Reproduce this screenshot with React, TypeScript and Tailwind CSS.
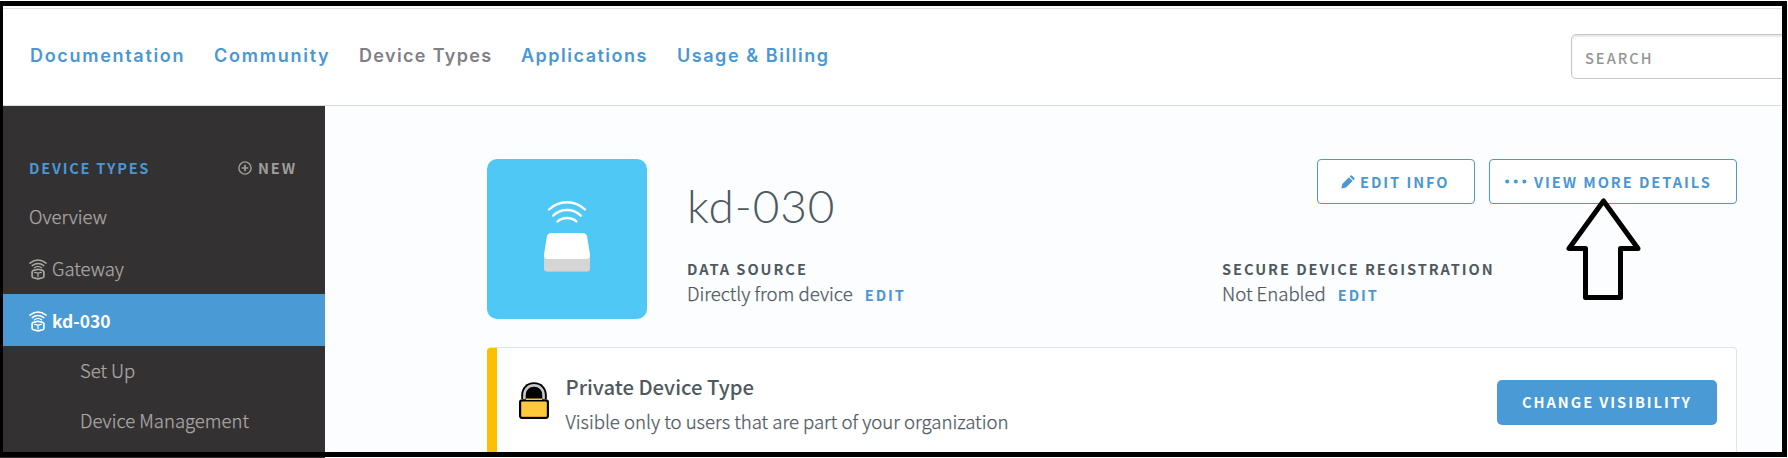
import type { ReactNode } from "react";

function GatewayIcon() {
  return (
    <svg width="18" height="21" viewBox="0 0 18 21" fill="none" stroke="currentColor" strokeWidth="1.5" strokeLinecap="round" className="shrink-0">
      <path d="M0.9 4.1Q9 -1.9 17.1 4.1" />
      <path d="M3.2 6.6Q9 2.2 14.8 6.6" />
      <path d="M5.5 8.8Q9 6 12.5 8.8" strokeWidth="1.4" />
      <path d="M9 10.2L13.6 11.4Q14.9 11.8 14.9 13V17.2Q14.9 18.3 13.6 18.7L9 19.9L4.4 18.7Q3.1 18.3 3.1 17.2V13Q3.1 11.8 4.4 11.4Z" strokeWidth="1.7" strokeLinejoin="round" />
      <path d="M5.6 13.4L9 14.2L12.4 13.4M9 14.2V17.6" strokeWidth="1.3" />
    </svg>
  );
}

function PlusCircle() {
  return (
    <svg width="14" height="14" viewBox="0 0 14 14" fill="none" stroke="currentColor" strokeWidth="1.4" className="shrink-0">
      <circle cx="7" cy="7" r="6.1" />
      <path d="M7 3.7V10.3M3.7 7H10.3" strokeWidth="1.7" />
    </svg>
  );
}

function Pencil() {
  return (
    <svg width="14" height="14" viewBox="0 0 14 14" fill="currentColor" className="shrink-0">
      <path d="M0.3 13.6L1.3 8.9L7.9 2.3L11.6 6L5 12.6Z" />
      <path d="M8.7 1.5L9.7 0.5Q10.3 0 10.9 0.5L13.4 3Q13.9 3.6 13.4 4.2L12.4 5.2Z" />
    </svg>
  );
}

function Dots() {
  return (
    <svg width="22" height="5" viewBox="0 0 22 5" fill="currentColor" className="shrink-0">
      <circle cx="2.2" cy="2.5" r="2" />
      <circle cx="10.8" cy="2.5" r="2" />
      <circle cx="19.4" cy="2.5" r="2" />
    </svg>
  );
}

function Lock() {
  return (
    <svg width="30" height="37" viewBox="0 0 30 37" className="shrink-0">
      <path d="M2.2 17V13.2C2.2 5.6 7.6 0.2 15 0.2S27.8 5.6 27.8 13.2V17Z" fill="#000" />
      <path d="M5.4 19V13.4C5.4 7.2 9.4 3.4 15 3.4S24.6 7.2 24.6 13.4V19" fill="none" stroke="#c6c8ca" strokeWidth="2.6" />
      <rect x="1.1" y="18.3" width="27.8" height="17.5" rx="2" fill="#ffc83d" stroke="#000" strokeWidth="2.2" />
      <path d="M7 17.2H23" stroke="#ffc83d" strokeWidth="1.6" />
      <path d="M2.4 32.6V33.3Q2.4 34.5 3.6 34.5H26.4Q27.6 34.5 27.6 33.3V32.6" fill="none" stroke="#e09f2a" strokeWidth="0.9" />
    </svg>
  );
}

function DeviceArt() {
  return (
    <svg width="160" height="160" viewBox="0 0 160 160" fill="none" stroke="#fff" strokeWidth="2.4" strokeLinecap="round">
      <path d="M62 50.5C72 40.8 88 40.8 98 50.5" />
      <path d="M66.2 56.6C74 49.2 86 49.2 93.8 56.6" />
      <path d="M70.6 62.4C76 57.8 84 57.8 89.4 62.4" />
      <g stroke="none">
        <path d="M57 97H103V110Q103 113 100 113H60Q57 113 57 110Z" fill="#bfc3c4" />
        <path d="M57 95H103V109Q103 112 100 112H60Q57 112 57 109Z" fill="#d5d5d5" />
        <path d="M64.5 74H95.5Q99.5 74 100.2 78L103 95.5Q103.2 100 99 100H61Q56.8 100 57 95.5L59.8 78Q60.5 74 64.5 74Z" fill="#fff" />
      </g>
    </svg>
  );
}

const caps = "text-[14.6px] font-bold tracking-[1.95px] whitespace-nowrap";
const light = "text-[18.6px] font-light whitespace-nowrap [-webkit-text-stroke:0.25px]";

function Fact({ label, value, className }: { label: string; value: string; className: string }) {
  return (
    <div className={className}>
      <div className={`${caps} h-[23px] leading-6`}>{label}</div>
      <div className="flex h-[25px] items-baseline leading-[25px]">
        <span className={light}>{value}</span>
        <a className={`${caps} ml-3 text-[#4a97d3]`}>EDIT</a>
      </div>
    </div>
  );
}

function OutlineButton({ icon, className, children }: { icon: ReactNode; className: string; children: ReactNode }) {
  return (
    <button className={`${caps} flex h-[45px] items-center rounded-[4px] border border-[#4f97cf] bg-white text-[#4a97d3] ${className}`}>
      {icon}
      <span>{children}</span>
    </button>
  );
}

const nav = [
  { label: "Documentation", style: "w-[184px] tracking-[1.7px] text-[#4a97d3]" },
  { label: "Community", style: "w-[145px] tracking-[1.75px] text-[#4a97d3]" },
  { label: "Device Types", style: "w-[162px] tracking-[1.35px] text-[#7f7f85]" },
  { label: "Applications", style: "w-[156px] tracking-[1.5px] text-[#4a97d3]" },
  { label: "Usage & Billing", style: "tracking-[1.55px] text-[#4a97d3]" },
];

export default function App() {
  return (
    <div className="relative flex h-[458px] w-[1788px] flex-col overflow-hidden bg-white font-['Noto_Sans_CJK_SC',sans-serif] text-[#4f5960]">
      <header className="flex h-[106px] shrink-0 border-b border-[#dcdcde]">
        <nav className="mt-[8px] flex flex-1 border-t border-[#e2e2e3] pt-[35px] pl-[30px] font-['Inter',sans-serif] text-[18px] leading-6 font-semibold">
          {nav.map((n) => (
            <a key={n.label} className={`whitespace-nowrap ${n.style}`}>{n.label}</a>
          ))}
        </nav>
        <div className="mt-[8px] w-[217px] border-t border-[#e2e2e3] pt-[25px]">
          <div className="flex h-[45px] items-center rounded-l-[5px] border border-[#c6c6c8] pt-[2px] pl-[13px] text-[14.6px] font-medium tracking-[2px] text-[#949494] shadow-[inset_0_2px_2px_rgba(0,0,0,0.1)]">
            SEARCH
          </div>
        </div>
      </header>

      <div className="flex h-[352px] shrink-0">
        <aside className="w-[325px] shrink-0 bg-[#343132] pt-[42px] text-[18.5px] font-light text-[#aaa7a5] [-webkit-text-stroke:0.25px]">
          <div className="mb-[2px] flex h-[40px] items-center justify-between pr-[28px] pl-[29px] [-webkit-text-stroke:0px]">
            <span className="text-[14.6px] font-bold tracking-[1.75px] text-[#4a97d3]">DEVICE TYPES</span>
            <span className={`${caps} flex items-center gap-[6px] text-[#a09d9b]`}>
              <PlusCircle />
              NEW
            </span>
          </div>
          <div className="flex h-[52px] items-center pt-[2px] pl-[29px]">Overview</div>
          <div className="flex h-[52px] items-center gap-[5px] pt-[2px] pl-[29px]">
            <GatewayIcon />
            Gateway
          </div>
          <div className="flex h-[52px] items-center gap-[5px] bg-[#4a9ad6] pt-[2px] pl-[29px] text-[17.4px] font-bold text-white [-webkit-text-stroke:0px]">
            <GatewayIcon />
            kd-030
          </div>
          <div className="flex h-[49px] items-center pl-[80px]">Set Up</div>
          <div className="flex h-[51px] items-center pl-[80px]">Device Management</div>
        </aside>

        <main className="flex-1 bg-[#fcfdff] pt-[53px] pl-[162px]">
          <section className="flex h-[188px] w-[1250px]">
            <div className="h-[160px] w-[160px] shrink-0 overflow-hidden rounded-[10px] bg-[#4fc8f6]">
              <DeviceArt />
            </div>
            <div className="ml-[40px] flex-1">
              <div className="flex h-[98px] justify-between">
                <h1 className="mt-[22px] font-['Lato',sans-serif] text-[46px] leading-[50px] font-light tracking-[0.9px] text-[#4f5960]">kd-030</h1>
                <div className="flex gap-[14px]">
                  <OutlineButton icon={<Pencil />} className="w-[158px] gap-[5px] pl-[23px]">EDIT INFO</OutlineButton>
                  <OutlineButton icon={<Dots />} className="w-[248px] gap-[7px] pl-[15px]">VIEW MORE DETAILS</OutlineButton>
                </div>
              </div>
              <div className="flex">
                <Fact label="DATA SOURCE" value="Directly from device" className="w-[535px]" />
                <Fact label="SECURE DEVICE REGISTRATION" value="Not Enabled" className="flex-1" />
              </div>
            </div>
          </section>

          <section className="flex h-[120px] w-[1250px] overflow-hidden rounded-[4px] border border-l-0 border-[#dfe5e9] bg-white">
            <div className="w-[10px] shrink-0 bg-[#fdbf03]" />
            <div className="mt-[34px] ml-[22px]">
              <Lock />
            </div>
            <div className="mt-[22px] ml-[16.5px] flex-1">
              <div className="h-8 text-[20.3px] leading-8 font-medium">Private Device Type</div>
              <div className={`${light} mt-[5px] h-[28px] leading-[28px]`}>Visible only to users that are part of your organization</div>
            </div>
            <button className={`${caps} mt-[32px] mr-[19px] h-[45px] w-[220px] rounded-[5px] bg-[#4a9ad6] pb-[2px] text-white`}>
              CHANGE VISIBILITY
            </button>
          </section>
        </main>
      </div>

      <svg className="absolute top-[196px] left-[1562px]" width="84" height="108" viewBox="0 0 84 108" fill="none" stroke="#000" strokeWidth="5" strokeLinejoin="round">
        <path d="M41.5 5L7 52.5H23.5V101.5H58.5V52.5H76Z" />
      </svg>

      <div className="absolute inset-x-0 top-0 h-px bg-white" />
      <div className="absolute inset-x-0 top-px h-[5px] bg-black" />
      <div className="absolute top-px left-0 h-[456px] w-[3px] bg-black" />
      <div className="absolute top-[452px] right-px left-0 h-[5px] bg-black" />
      <div className="absolute top-px right-px h-[456px] w-[5px] bg-black" />
      <div className="absolute top-0 right-0 h-full w-px bg-white" />
      <div className="absolute right-0 bottom-0 left-[325px] h-px bg-white" />
    </div>
  );
}
